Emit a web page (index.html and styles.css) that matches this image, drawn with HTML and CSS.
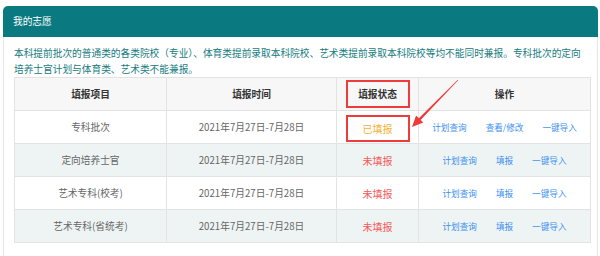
FILE: index.html
```html
<!DOCTYPE html>
<html lang="zh-CN">
<head>
    <meta charset="UTF-8">
    <meta name="viewport" content="width=device-width, initial-scale=1.0">
    <title>我的志愿</title>
    <link rel="stylesheet" href="styles.css">
</head>
<body>

<div class="page">
    <div class="panel">
        <div class="panelHeader">我的志愿</div>
        <div class="panelBody">
            <p class="notice">本科提前批次的普通类的各类院校（专业）、体育类提前录取本科院校、艺术类提前录取本科院校等均不能同时兼报。专科批次的定向培养士官计划与体育类、艺术类不能兼报。</p>

            <table class="wishTable">
                <colgroup>
                    <col class="colItem">
                    <col class="colTime">
                    <col class="colState">
                    <col class="colOps">
                </colgroup>
                <thead>
                    <tr>
                        <th>填报项目</th>
                        <th>填报时间</th>
                        <th><span class="mark markHead">填报状态</span></th>
                        <th>操作</th>
                    </tr>
                </thead>
                <tbody>
                    <tr>
                        <td>专科批次</td>
                        <td>2021年7月27日-7月28日</td>
                        <td><span class="mark markCell done">已填报</span></td>
                        <td>
                            <div class="ops">
                                <a href="#">计划查询</a>
                                <a href="#">查看/修改</a>
                                <a href="#">一键导入</a>
                            </div>
                        </td>
                    </tr>
                    <tr>
                        <td>定向培养士官</td>
                        <td>2021年7月27日-7月28日</td>
                        <td><span class="todo">未填报</span></td>
                        <td>
                            <div class="ops">
                                <a href="#">计划查询</a>
                                <a href="#">填报</a>
                                <a href="#">一键导入</a>
                            </div>
                        </td>
                    </tr>
                    <tr>
                        <td>艺术专科(校考)</td>
                        <td>2021年7月27日-7月28日</td>
                        <td><span class="todo">未填报</span></td>
                        <td>
                            <div class="ops">
                                <a href="#">计划查询</a>
                                <a href="#">填报</a>
                                <a href="#">一键导入</a>
                            </div>
                        </td>
                    </tr>
                    <tr>
                        <td>艺术专科(省统考)</td>
                        <td>2021年7月27日-7月28日</td>
                        <td><span class="todo">未填报</span></td>
                        <td>
                            <div class="ops">
                                <a href="#">计划查询</a>
                                <a href="#">填报</a>
                                <a href="#">一键导入</a>
                            </div>
                        </td>
                    </tr>
                </tbody>
            </table>
        </div>
    </div>

    <!-- annotation arrow -->
    <svg class="arrow" width="60" height="60" viewBox="0 0 60 60">
        <polygon points="52.8,4.8 13.8,43.3 11.1,40.6 7,52 18.3,47.6 15.6,44.9 53.2,5.2" fill="#f03a3a"/>
    </svg>
</div>

</body>
</html>
```

FILE: styles.css
```css
body {
    margin: 0;
    background-color: #fff;
    font-family: 'Noto Sans CJK SC', 'Noto Sans', sans-serif;
}

.page {
    position: relative;
    height: 256px;
    overflow: hidden;
}

.panel {
    margin: 6px 2px 0 3px;
    border: 1px solid #e6e6e6;
    border-top: none;
    border-radius: 5px 5px 0 0;
    height: 300px;
}

.panelHeader {
    height: 31px;
    line-height: 31px;
    margin: 0 -1px;
    padding-left: 10px;
    background-color: #0b7a80;
    color: #fff;
    font-size: 9.7px;
    border-radius: 5px 5px 0 0;
}

.panelBody {
    padding: 8px 7px 0 10px;
}

.notice {
    margin: 0;
    font-size: 9.7px;
    line-height: 16px;
    color: #167b80;
}

.wishTable {
    width: 576px;
    table-layout: fixed;
    border-collapse: collapse;
    font-size: 9.7px;
}

.colItem { width: 152px; }
.colTime { width: 170px; }
.colState { width: 82px; }
.colOps { width: 172px; }

th, td {
    border: 1px solid #e3e3e3;
    padding: 0;
    height: 32px;
    text-align: center;
    vertical-align: middle;
}

th {
    background-color: #f7f7f7;
    color: #333;
    font-weight: bold;
}

td {
    color: #666;
}

tbody tr:nth-child(even) td {
    background-color: #eef4f4;
}

.mark {
    display: inline-block;
    box-sizing: border-box;
    width: 64px;
    border: 2px solid #ee3b3b;
}

.markHead {
    height: 28px;
    line-height: 24px;
}

.markCell {
    height: 27px;
    line-height: 23px;
    margin-top: 3px;
}

.done {
    color: #f2b134;
    font-size: 10px;
}

.todo {
    color: #f45a5a;
    font-size: 10px;
}

.ops {
    display: flex;
    justify-content: center;
    gap: 19px;
}

.ops a {
    color: #3d8ff0;
    font-size: 8.6px;
    text-decoration: none;
}

.arrow {
    position: absolute;
    left: 405px;
    top: 75px;
}
```
